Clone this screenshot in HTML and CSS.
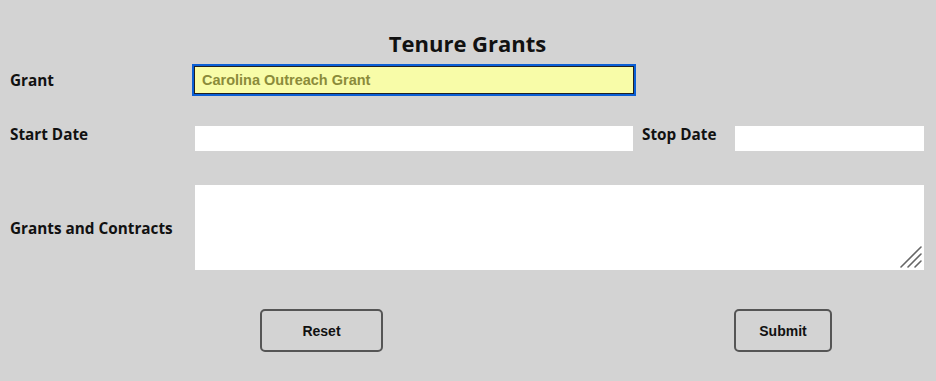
FILE: index.html
```html
<!DOCTYPE html>
<html lang="en">
<head>
  <meta charset="UTF-8">
  <meta name="viewport" content="width=device-width, initial-scale=1.0">
  <title>Tenure Grants</title>
  <link rel="stylesheet" href="styles.css">
</head>
<body>
<form class="grant-form">
  <h1 class="title">Tenure Grants</h1>

  <div class="row row-grant">
    <label class="field-label" for="grant">Grant</label>
    <input type="text" id="grant" class="field field-grant" value="Carolina Outreach Grant">
  </div>

  <div class="row row-dates">
    <label class="field-label" for="start">Start Date</label>
    <input type="text" id="start" class="field field-date">
    <label class="field-label stop-label" for="stop">Stop Date</label>
    <input type="text" id="stop" class="field field-stop">
  </div>

  <div class="row row-notes">
    <label class="field-label" for="contracts">Grants and Contracts</label>
    <div class="notes-wrap">
      <textarea id="contracts" class="field field-notes"></textarea>
      <svg class="resizer" width="24" height="24" viewBox="0 0 24 24" fill="none" stroke="#666" stroke-width="1.6" stroke-linecap="round">
        <line x1="2" y1="22" x2="22" y2="2"></line>
        <line x1="9" y1="22" x2="22" y2="9"></line>
        <line x1="16" y1="22" x2="22" y2="16"></line>
      </svg>
    </div>
  </div>

  <div class="buttons">
    <button type="reset" class="btn btn-reset">Reset</button>
    <button type="submit" class="btn btn-submit">Submit</button>
  </div>
</form>
</body>
</html>
```

FILE: styles.css
```css
:root {
  --page-bg: #d3d3d3;
  --focus-blue: #0a5fd6;
  --btn-border: #555;
}

body {
  margin: 0;
  padding: 0;
  background-color: var(--page-bg);
  color: #111;
  font-family: "Open Sans", "DejaVu Sans", sans-serif;
}

.grant-form {
  padding: 0 11px 0 10px;
}

.title {
  margin: 0;
  padding-top: 28px;
  font-size: 22px;
  line-height: 30px;
  font-weight: 700;
  text-align: center;
}

.row {
  display: flex;
  align-items: center;
}

.row-grant {
  margin-top: 8px;
}

.row-dates {
  margin-top: 31px;
  align-items: flex-start;
}

.row-notes {
  margin-top: 32px;
}

.field-label {
  width: 184px;
  flex-shrink: 0;
  font-size: 15.3px;
  font-weight: 700;
  line-height: 18px;
}

.stop-label {
  width: 92px;
  padding-left: 8px;
}

.field {
  box-sizing: border-box;
  border: 1px solid var(--page-bg);
  background: #fff;
  border-radius: 0;
  margin: 0;
  font-family: "Liberation Sans", Arial, sans-serif;
  font-size: 14.5px;
  font-weight: 700;
}

.field-grant {
  width: 440px;
  height: 28px;
  padding: 0 7px;
  background: #f8fca8;
  border-color: #222;
  color: #8b8b3a;
  outline: 2px solid var(--focus-blue);
}

.field-date {
  width: 440px;
  height: 27px;
}

.field-stop {
  width: 191px;
  height: 27px;
}

.notes-wrap {
  position: relative;
  display: flex;
}

.field-notes {
  width: 731px;
  height: 87px;
  resize: none;
}

.resizer {
  position: absolute;
  right: 2px;
  bottom: 2px;
  pointer-events: none;
}

.buttons {
  display: flex;
  margin-top: 38px;
  padding-left: 250px;
  gap: 351px;
}

.btn {
  height: 43px;
  background: transparent;
  border: 2px solid var(--btn-border);
  border-radius: 5px;
  font-family: "Liberation Sans", Arial, sans-serif;
  font-size: 14px;
  font-weight: 700;
  color: #111;
  cursor: pointer;
}

.btn-reset {
  width: 123px;
}

.btn-submit {
  width: 98px;
}
```
